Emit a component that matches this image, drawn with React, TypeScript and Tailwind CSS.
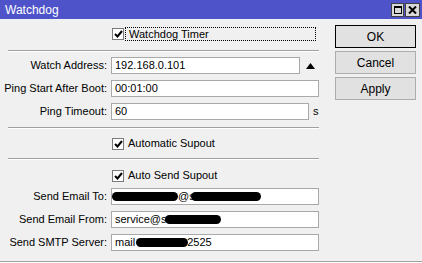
import React from "react";

const labelCls = "w-[108px] shrink-0 text-right pr-[1px] leading-[17px] whitespace-nowrap";
const inputCls =
  "ml-[3px] h-[17px] bg-white border border-[#a9a9a9] pl-[3px] flex items-center leading-none whitespace-nowrap overflow-hidden";

function Check({ label, focus }: { label: string; focus?: boolean }) {
  return (
    <div className="flex items-center h-full">
      <div className="ml-[112px] w-[12px] h-[12px] bg-white border border-[#7a7a7a] flex items-center justify-center">
        <svg width="9" height="8" viewBox="0 0 9 8">
          <path d="M1 4 L3.5 6.5 L8 1" fill="none" stroke="#000" strokeWidth="2" />
        </svg>
      </div>
      <div
        className={`ml-[1px] h-full flex items-center pl-[3px] ${
          focus ? "w-[191px] border border-dotted border-black" : ""
        }`}
      >
        {label}
      </div>
    </div>
  );
}

function Blob({ w, className = "" }: { w: string; className?: string }) {
  return <span className={`inline-block bg-black rounded-full h-[9px] ${w} ${className}`} />;
}

function Sep() {
  return <div className="ml-[8px] w-[311px] h-px bg-[#a0a0a0] border-b border-white box-content" />;
}

export default function App() {
  return (
    <div className="w-[422px] h-[263px] bg-[#f0f0f0] font-['Liberation_Sans',Arial,sans-serif] text-[11px] text-black overflow-hidden">
      {/* Title bar */}
      <div className="h-[19px] bg-[#4e53c9] flex items-center pl-[5px] pr-[2px] text-white text-[12px]">
        <span className="flex-1">Watchdog</span>
        <div className="flex gap-px">
          <div className="w-[13px] h-[14px] bg-[#d8d8d8] border border-[#404040] flex items-center justify-center">
            <div className="w-[8px] h-[8px] border border-black border-t-2" />
          </div>
          <div className="w-[15px] h-[14px] bg-[#d8d8d8] border border-[#404040] flex items-center justify-center">
            <svg width="9" height="8" viewBox="0 0 9 8">
              <path d="M1 0.5 L8 7.5 M8 0.5 L1 7.5" stroke="#000" strokeWidth="2" />
            </svg>
          </div>
        </div>
      </div>

      <div className="flex">
        {/* Left form */}
        <div className="w-[327px] flex flex-col">
          <div className="mt-[8px] h-[14px]">
            <Check label="Watchdog Timer" focus />
          </div>
          <div className="mt-[9px]">
            <Sep />
          </div>

          <div className="mt-[5px] flex items-center h-[17px]">
            <span className={labelCls}>Watch Address:</span>
            <div className={`${inputCls} w-[189px]`}>192.168.0.101</div>
            <svg className="ml-[6px]" width="9" height="6" viewBox="0 0 9 6">
              <path d="M0 6 L4.5 0 L9 6 Z" fill="#000" />
            </svg>
          </div>
          <div className="mt-[6px] flex items-center h-[17px]">
            <span className={labelCls}>Ping Start After Boot:</span>
            <div className={`${inputCls} w-[208px]`}>00:01:00</div>
          </div>
          <div className="mt-[6px] flex items-center h-[17px]">
            <span className={labelCls}>Ping Timeout:</span>
            <div className={`${inputCls} w-[198px]`}>60</div>
            <span className="ml-[4px]">s</span>
          </div>

          <div className="mt-[7px]">
            <Sep />
          </div>
          <div className="mt-[8px] h-[13px]">
            <Check label="Automatic Supout" />
          </div>
          <div className="mt-[8px]">
            <Sep />
          </div>
          <div className="mt-[9px] h-[13px]">
            <Check label="Auto Send Supout" />
          </div>

          <div className="mt-[6px] flex items-center h-[17px]">
            <span className={labelCls}>Send Email To:</span>
            <div className={`${inputCls} w-[208px] !pl-0 -ml-[1px]`}>
              <Blob w="w-[66px]" />
              <span>@s</span>
              <Blob w="w-[70px]" className="-ml-[4px]" />
            </div>
          </div>
          <div className="mt-[6px] flex items-center h-[17px]">
            <span className={labelCls}>Send Email From:</span>
            <div className={`${inputCls} w-[208px]`}>
              <span>service@s</span>
              <Blob w="w-[56px]" className="-ml-[2px]" />
            </div>
          </div>
          <div className="mt-[6px] flex items-center h-[17px]">
            <span className={labelCls}>Send SMTP Server:</span>
            <div className={`${inputCls} w-[208px]`}>
              <span>mail</span>
              <Blob w="w-[52px]" className="ml-[1px]" />
              <span className="-ml-[1px]">2525</span>
            </div>
          </div>
        </div>

        {/* Buttons */}
        <div className="ml-[8px] mt-[6px] flex flex-col gap-[3px] text-[12px]">
          <button className="w-[81px] h-[23px] bg-[#e1e1e1] border border-black">OK</button>
          <button className="w-[81px] h-[23px] bg-[#e1e1e1] border border-[#adadad]">Cancel</button>
          <button className="w-[81px] h-[23px] bg-[#e1e1e1] border border-[#adadad]">Apply</button>
        </div>
      </div>

      <div className="mt-[10px] h-px bg-[#a0a0a0] border-b border-white box-content" />
    </div>
  );
}
